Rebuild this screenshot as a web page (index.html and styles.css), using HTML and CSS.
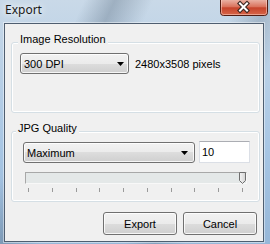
FILE: index.html
```html
<!DOCTYPE html>
<html>
<head>
<meta charset="utf-8">
<link rel="stylesheet" href="styles.css">
</head>
<body>
<div class="window">
  <div class="titlebar">
    <span class="title">Export</span>
    <span class="close">
      <svg width="48" height="16" viewBox="0 0 48 16">
        <defs>
          <linearGradient id="cg" x1="0" y1="0" x2="0" y2="1">
            <stop offset="0" stop-color="#eab0a2"/>
            <stop offset="0.45" stop-color="#d9705a"/>
            <stop offset="0.5" stop-color="#c6432b"/>
            <stop offset="1" stop-color="#d8684a"/>
          </linearGradient>
        </defs>
        <path d="M0.5 0 V12.5 a3 3 0 0 0 3 3 H44.5 a3 3 0 0 0 3 -3 V0" fill="url(#cg)" stroke="#521c12"/>
        <path d="M1.5 0 V12.5 a2 2 0 0 0 2 2 H44.5 a2 2 0 0 0 2 -2 V0" fill="none" stroke="rgba(255,220,210,0.5)"/>
        <path d="M20 3.5 L27 10.5 M27 3.5 L20 10.5" stroke="#3a2622" stroke-width="4.2" stroke-linecap="square"/>
        <path d="M20 3.5 L27 10.5 M27 3.5 L20 10.5" stroke="#ffffff" stroke-width="2" stroke-linecap="square"/>
      </svg>
    </span>
  </div>
  <div class="client">
    <div class="group">
      <div class="legend l1">Image Resolution</div>
      <div class="row r1">
        <div class="combo c1"><span>300 DPI</span><svg width="7" height="4" viewBox="0 0 7 4"><path d="M0 0H7L3.5 4Z" fill="#000"/></svg></div>
        <span class="info">2480x3508 pixels</span>
      </div>
    </div>
    <div class="group g2">
      <div class="legend l2">JPG Quality</div>
      <div class="row r2">
        <div class="combo c2"><span>Maximum</span><svg width="7" height="4" viewBox="0 0 7 4"><path d="M0 0H7L3.5 4Z" fill="#000"/></svg></div>
        <div class="edit">10</div>
      </div>
      <div class="slider">
        <div class="track"></div>
        <svg class="thumb" width="7" height="12" viewBox="0 0 7 12">
          <defs>
            <linearGradient id="tg" x1="0" y1="0" x2="1" y2="0">
              <stop offset="0" stop-color="#f4f4f4"/>
              <stop offset="1" stop-color="#d4d4d4"/>
            </linearGradient>
          </defs>
          <path d="M0.5 0.5 H6.5 V8.5 L3.5 11.5 L0.5 8.5 Z" fill="url(#tg)" stroke="#6f6f6f"/>
        </svg>
      </div>
      <div class="ticks"><i></i><i></i><i></i><i></i><i></i><i></i><i></i><i></i><i></i><i></i></div>
    </div>
    <div class="buttons">
      <button class="btn">Export</button>
      <button class="btn">Cancel</button>
    </div>
  </div>
</div>
</body>
</html>
```
FILE: styles.css
```css
html, body {
  margin: 0;
  padding: 0;
}
body {
  width: 270px;
  height: 244px;
  overflow: hidden;
}
.window {
  width: 270px;
  height: 244px;
  box-sizing: border-box;
  display: flex;
  flex-direction: column;
  background:
    linear-gradient(115deg, transparent 0 22%, rgba(80,100,120,0.35) 30%, transparent 40%, transparent 62%, rgba(80,100,120,0.28) 70%, transparent 78%),
    linear-gradient(#c9d9e8, #a8c6e4 60%, #96b7d8);
  font-family: "Liberation Sans", Arial, sans-serif;
  font-size: 11px;
  color: #000;
}
.titlebar {
  height: 23px;
  display: flex;
  align-items: flex-start;
  padding: 0 2px 0 5px;
}
.title {
  font-family: "Noto Sans", "Open Sans", sans-serif;
  font-size: 12px;
  line-height: 16px;
  margin-top: 2px;
  color: #1a1a1a;
  text-shadow: 0 0 6px #fff, 0 0 10px rgba(255,255,255,0.9);
}
.close {
  margin-left: auto;
  display: block;
  height: 16px;
}
.close svg { display: block; }
.client {
  width: 260px;
  height: 219px;
  margin-left: 4px;
  box-sizing: border-box;
  border: 1px solid #4f5e70;
  box-shadow: 0 0 0 1px rgba(255,255,255,0.45);
  background: #f0f0f0;
  padding-top: 18px;
  display: flex;
  flex-direction: column;
}
.group {
  margin-left: 6px;
  width: 249px;
  height: 71px;
  box-sizing: border-box;
  border: 1px solid #d5dfe5;
  border-radius: 3px;
  box-shadow: inset 0 0 0 1px #fff;
  display: flex;
  flex-direction: column;
  align-items: flex-start;
}
.g2 { margin-top: 18px; }
.legend {
  line-height: 13px;
  height: 13px;
  margin-top: -10px;
  padding: 0 2px;
  background: #f0f0f0;
  white-space: nowrap;
}
.l1 { margin-left: 6px; }
.l2 { margin-left: 4px; }
.row {
  display: flex;
  align-items: center;
}
.r1 { margin: 7px 0 0 8px; }
.r2 { margin: 6px 0 0 11px; align-items: flex-start; }
.combo, .btn {
  box-sizing: border-box;
  border: 1px solid #707070;
  border-radius: 3px;
  background: linear-gradient(#f2f2f2 0%, #ebebeb 50%, #dddddd 50%, #cfcfcf 100%);
  box-shadow: inset 0 0 0 1px rgba(255,255,255,0.8);
}
.combo {
  height: 21px;
  display: flex;
  align-items: center;
  justify-content: space-between;
  padding: 0 4px 0 3px;
}
.combo svg { display: block; }
.c1 { width: 109px; }
.c2 { width: 172px; margin-top: 1px; padding-right: 6px; }
.info { margin-left: 6px; }
.edit {
  width: 51px;
  height: 22px;
  margin-left: 4px;
  box-sizing: border-box;
  border: 1px solid #dbdfe6;
  border-top-color: #abadb3;
  background: #fff;
  padding-left: 2px;
  line-height: 20px;
}
.slider {
  position: relative;
  margin: 9px 0 0 13px;
  width: 222px;
  height: 12px;
}
.track {
  width: 100%;
  height: 100%;
  box-sizing: border-box;
  border-top: 1px solid #a8a8a8;
  border-left: 1px solid #a8a8a8;
  border-right: 1px solid #f8f8f8;
  border-bottom: 1px solid #f8f8f8;
  background: #e4e8e8;
}
.thumb {
  position: absolute;
  left: 214px;
  top: 0;
  display: block;
}
.ticks {
  margin: 4px 0 0 16px;
  width: 215px;
  height: 4px;
  display: flex;
  justify-content: space-between;
}
.ticks i {
  display: block;
  width: 1px;
  height: 4px;
  background: #9a9a9a;
}
.buttons {
  display: flex;
  justify-content: flex-end;
  gap: 6px;
  margin: 10px 6px 0 0;
}
.btn {
  width: 74px;
  height: 23px;
  font-family: "Liberation Sans", Arial, sans-serif;
  font-size: 11px;
  color: #000;
  padding: 0;
  margin: 0;
}
```
